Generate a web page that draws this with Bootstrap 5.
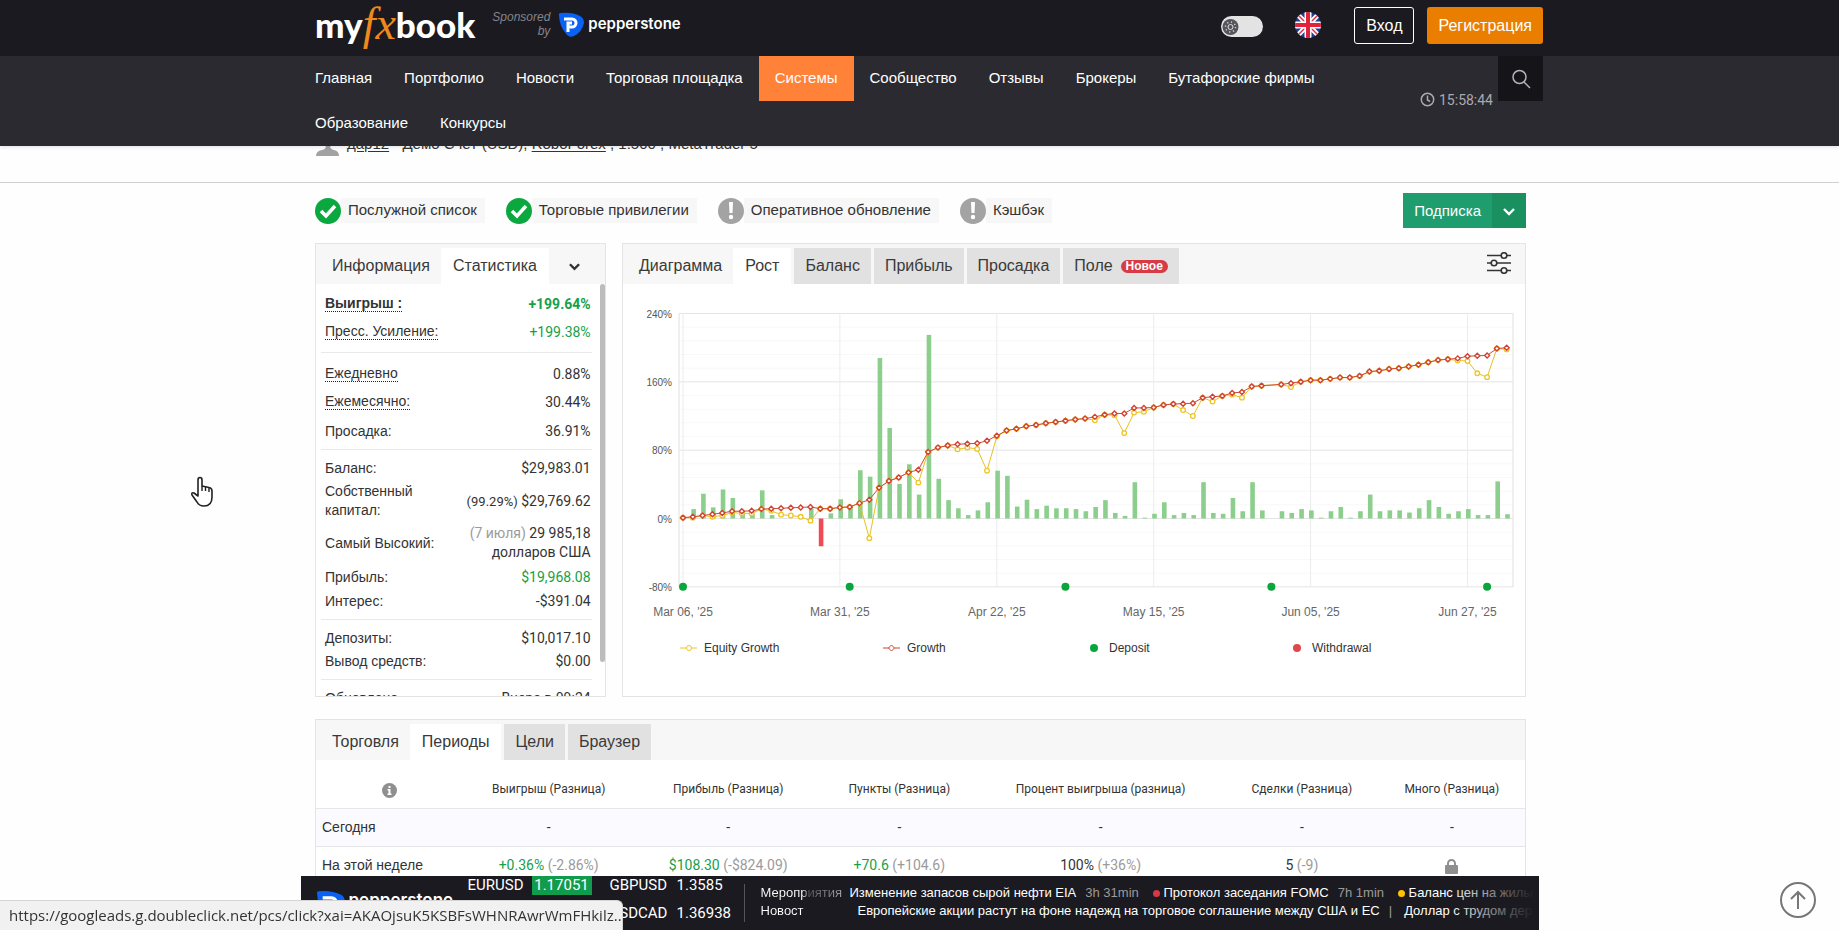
<!DOCTYPE html>
<html lang="ru">
<head>
<meta charset="utf-8">
<meta name="viewport" content="width=device-width, initial-scale=1">
<title>Myfxbook</title>
<link rel="stylesheet" href="https://cdn.jsdelivr.net/npm/bootstrap@5.3.0/dist/css/bootstrap.min.css">
<style>
  body { font-family: "Liberation Sans", Arial, sans-serif; font-size: 14px; line-height: 20px; color: #333; background: #fefefe; overflow: hidden; height: 100vh; }
  a { color: inherit; text-decoration: none; }
  .wrap { width: 100%; max-width: 1213px; margin: 0 auto; padding-left: 2px; }
  .num { font-family: Roboto, "Liberation Sans", sans-serif; }
  .wide-row { margin-right: -17px; }

  .topbar { background: #1b1a20; }
  .topbar .wide-row { height: 56px; }
  .logo-row { margin-bottom: 8px; }
  .logo { font-family: Lato, sans-serif; font-weight: 900; font-size: 35px; line-height: 48px; color: #fff; }
  .logo i { font-family: "Liberation Serif", serif; font-weight: 400; font-size: 46px; color: #ee8a1d; }
  .sponsor { font-size: 12px; line-height: 14px; font-style: italic; color: #85848a; width: 60px; margin-left: 15px; }
  .pepper { font-family: Inter, sans-serif; font-weight: 600; font-size: 15px; color: #fff; }
  .theme-switch { width: 42px; height: 21px; border-radius: 11px; background: #e3e3e3; margin-bottom: 3px; }
  .flag-link { margin: 0 33px 6px 32px; }
  .btn-top { height: 37px; border-radius: 3px; font-size: 16px; line-height: 20px; color: #fff; padding: 0 11px; margin-bottom: 5px; }
  .btn-login { border: 1px solid #fff; margin-right: 13px; }
  .btn-join { background: #e97e00; border: 0; }

  .mainnav { background: #2b2a31; }
  .mainnav ul { margin-left: -16px; }
  .mainnav li a { display: block; padding: 0 16px 2px; line-height: 43px; font-size: 15px; color: #fff; }
  .mainnav li a.active { background: #ff8238; }
  .clock { color: #aaa9ae; height: 45px; margin-top: 21px; padding-right: 5px; }
  .search { width: 45px; height: 45px; background: #151419; border: 0; padding: 0; }
  header { position: relative; z-index: 2; box-shadow: 0 1px 4px rgba(0,0,0,.12); }

  .account { margin-top: -20px; height: 57px; border-bottom: 1px solid #d0d0d0; font-size: 15px; }
  .account u { text-underline-offset: 2px; }
  .states { gap: 21px; padding-top: 10px; }
  .state { height: 26px; font-size: 15px; }
  .state span { background: #f7f7f7; height: 25px; line-height: 24px; padding: 0 8px 0 7px; }
  .btn-sub { height: 35px; background: #1f9d6e; color: #fff; border: 0; border-radius: 0; font-size: 15px; padding: 0 11px; }
  .btn-sub-more { background: #1a9061; width: 34px; padding: 0; }

  .panels { margin-top: 15px; }
  .trades { margin-top: 22px; }
  .panel { border: 1px solid #e4e4e4; background: #fff; }
  .tabs { background: #f7f7f7; height: 40px; padding: 4px 0 0 4px; }
  .tabs button { border: 0; background: none; font-size: 16px; height: 36px; padding: 0 10px; color: #3a3a3a; }
  .tabs .plain { padding: 0 11px 0 12px; }
  .tabs .on { background: #fff; padding: 0 12px; }
  .tabs .off { background: #e1e1e1; margin-left: 3px; padding: 0 11px; }
  .pill-new { background: #d73c46; color: #fff; font: bold 12px/13px "Liberation Sans", sans-serif; border-radius: 7px; padding: 0 5px; margin-left: 8px; }
  .stats-panel { width: 24%; height: 454px; overflow: hidden; }
  .chart-panel { width: 904px; height: 454px; }
  .stats { padding: 4px 8px 0 5px; }
  .stats table { width: 100%; }
  .stats td { padding: 2px 1px 2px 4px; line-height: 19px; vertical-align: middle; }
  .stats td:last-child { text-align: right; font-family: Roboto, "Liberation Sans", sans-serif; }
  .stats .tall td { height: 30px; }
  .stats .tall td:last-child { padding-top: 5px; }
  .stats .sep td { border-top: 1px solid #e9e9e9; padding-top: 9px; }
  .stats .last td { padding-bottom: 8px; }
  .stats .tall.last td { padding-bottom: 10px; }
  .stats .tall.sep td { padding-top: 9px; }
  .stats .tall.sep td:last-child { padding-top: 12px; }
  .stats .room td { padding-top: 6px; }
  .stats .mid td { height: 26px; }
  .stats .hint { border-bottom: 1px dotted #222; line-height: 16px; display: inline-block; }
  .eq { font-size: 13px; }
  .thumb { width: 5px; height: 378px; background: #bcbcbc; border-radius: 3px; }
  .gain { color: #17a048; }
  .soft { color: #9b9b9b; }

  .periods { width: 100%; table-layout: fixed; }
  .periods th { font: 12px/20px Roboto, sans-serif; text-align: center; height: 48px; padding-top: 12px; }
  .periods td { text-align: center; height: 38px; border-top: 1px solid #e6e6ea; font-family: Roboto, sans-serif; padding: 0; }
  .periods td:first-child { text-align: left; padding-left: 6px; font-family: "Liberation Sans", sans-serif; }
  .periods .stripe td { background: #fafaff; }

  .ticker { position: fixed; left: 0; right: 0; bottom: 0; z-index: 4; }
  .ticker > div { max-width: 1238px; height: 54px; margin: 0 auto; background: #1b1a20; color: #fff; position: relative; padding-left: 15px; }
  .quotes { width: 276px; font-size: 15px; display: grid; grid-template-columns: 64px 78px 67px 1fr; grid-template-rows: 19px 19px; align-content: start; row-gap: 9px; line-height: 19px; font-family: Roboto, sans-serif; }
  .quotes b { background: #119b4d; font-weight: 400; width: 60px; text-align: center; }
  .quotes small { grid-column: 1 / 3; font-size: 12px; line-height: 12px; color: #c8c8cc; }
  .brand { width: 152px; padding-top: 10px; }
  .brand .pepper { font-size: 17px; }
  .rule { width: 1px; height: 38px; background: #55545a; margin: 8px 16px 0 0; }
  .feed { font-size: 13px; line-height: 18px; margin-top: 8px; white-space: nowrap; overflow: hidden; }
  .feed .soft { margin-left: 9px; }
  .feed-name { width: 89px; font-size: 13px; background: linear-gradient(90deg, #fff 42px, #56555b 47px, #a5a4a8 84px); -webkit-background-clip: text; background-clip: text; color: transparent; }
  .feed-fade { width: 110px; height: 54px; position: absolute; right: 0; top: 0; background: linear-gradient(90deg, transparent 20px, #1b1a20 105px); }
  .ev { margin-left: 14px; }
  .dot { width: 7px; height: 7px; border-radius: 50%; display: inline-block; }
  .urlbar { position: fixed; left: 0; bottom: 0; z-index: 5; height: 30px; border: 1px solid #d5d5d5; border-width: 1px 1px 0 0; border-radius: 0 6px 0 0; background: #f1f1f1; font: 15px/28px "Open Sans", "Noto Sans", sans-serif; padding: 0 0 0 9px; color: #333; }
  .to-top { position: fixed; right: 22px; bottom: 11px; z-index: 4; width: 38px; height: 38px; padding: 0; border: 0; background: none; }
  .hand { position: fixed; left: 190px; top: 476px; z-index: 6; }
</style>
</head>
<body>
<header>
  <div class="topbar">
    <div class="wrap">
      <div class="wide-row d-flex align-items-center">
        <div class="logo-row d-flex align-items-center">
          <a href="#" class="logo d-flex align-items-center"><span>my</span><i>fx</i><span>book</span></a>
          <div class="sponsor text-end">Sponsored by</div>
          <svg class="ms-2" width="26" height="25" viewBox="0 0 26 25"><path d="M1 3Q0 1 3 1Q14 0 22 4Q26 6 26 11Q24 20 16 24Q12 26 9 23Q1 14 1 3Z" fill="#0a62f5"/><path d="M6 7H14A4 4 0 0 1 14 15H9M10 20V11H14" fill="none" stroke="#fff" stroke-width="3"/></svg>
          <a href="#" class="pepper ms-1">pepperstone</a>
        </div>
        <button class="theme-switch ms-auto border-0 p-0 d-flex align-items-center" aria-label="Тема">
          <svg width="18" height="18" viewBox="0 0 18 18"><circle cx="9.500" cy="9" r="8" fill="#55545d"/><circle cx="9.500" cy="9" r="2.500" fill="none" stroke="#ddd"/><circle cx="9.500" cy="9" r="5" fill="none" stroke="#ccc" stroke-width="1.500" stroke-dasharray="1.200 2.700"/></svg>
        </button>
        <a href="#" aria-label="English" class="d-flex flag-link">
          <svg width="26" height="26" viewBox="0 0 26 26"><clipPath id="c"><circle cx="13" cy="13" r="13"/></clipPath><g clip-path="url(#c)"><rect width="26" height="26" fill="#1d3f8f"/><path d="M0 0L26 26M26 0L0 26" stroke="#fff" stroke-width="5"/><path d="M0 0L26 26M26 0L0 26" stroke="#e0334b" stroke-width="1.500"/><path d="M13 0V26M0 13H26" stroke="#fff" stroke-width="7"/><path d="M13 0V26M0 13H26" stroke="#e0223b" stroke-width="4"/></g></svg>
        </a>
        <button class="btn-top btn-login bg-transparent">Вход</button>
        <button class="btn-top btn-join">Регистрация</button>
      </div>
    </div>
  </div>
  <nav class="mainnav">
    <div class="wrap">
      <div class="wide-row d-flex">
        <ul class="list-unstyled d-flex flex-wrap mb-0 flex-grow-1">
          <li><a href="#">Главная</a></li><li><a href="#">Портфолио</a></li><li><a href="#">Новости</a></li><li><a href="#">Торговая площадка</a></li><li><a href="#" class="active">Системы</a></li><li><a href="#">Сообщество</a></li><li><a href="#">Отзывы</a></li><li><a href="#">Брокеры</a></li><li><a href="#">Бутафорские фирмы</a></li><li><a href="#">Образование</a></li><li><a href="#">Конкурсы</a></li>
        </ul>
        <div class="clock num d-flex align-items-center">
          <svg class="me-1" width="15" height="15" viewBox="0 0 15 15" fill="none" stroke="#aaa9ae" stroke-width="1.500"><circle cx="7.500" cy="7.500" r="6.200"/><path d="M7.500 3.500V8L10 9.500"/></svg>15:58:44
        </div>
        <button class="search flex-shrink-0" aria-label="Поиск"><svg width="20" height="20" viewBox="0 0 20 20" fill="none" stroke="#b5b4b9" stroke-width="1.500"><circle cx="8.500" cy="8" r="6.500"/><path d="M13 13L19 19"/></svg></button>
      </div>
    </div>
  </nav>
</header>

<div class="account">
  <div class="wrap d-flex">
    <svg class="mt-2" width="24" height="24" viewBox="0 0 24 24" fill="#a2a2a2"><circle cx="13" cy="7" r="6"/><path d="M1 22Q1 17 7 16Q11 15 11 12H15Q15 15 19 16Q24 17 24 22Z"/></svg>
    <div class="ms-2 pt-1 mt-1"><u>дар12</u> - Демо Счёт (USD), <u>RoboForex</u> , 1:500 , MetaTrader 5</div>
  </div>
</div>

<main class="wrap">
  <div class="d-flex align-items-center states">
    <div class="state d-flex align-items-center"><svg width="26" height="26" viewBox="0 0 26 26"><circle cx="13" cy="13" r="13" fill="#0aa83e"/><path d="M6 13L11 18L20 8" fill="none" stroke="#fff" stroke-width="3.500"/></svg><span>Послужной список</span></div>
    <div class="state d-flex align-items-center"><svg width="26" height="26" viewBox="0 0 26 26"><circle cx="13" cy="13" r="13" fill="#0aa83e"/><path d="M6 13L11 18L20 8" fill="none" stroke="#fff" stroke-width="3.500"/></svg><span>Торговые привилегии</span></div>
    <div class="state d-flex align-items-center"><svg width="26" height="26" viewBox="0 0 26 26"><circle cx="13" cy="13" r="13" fill="#a3a3a3"/><path d="M11 4H15L14.500 15H11.500Z" fill="#fff"/><circle cx="13" cy="19" r="2.200" fill="#fff"/></svg><span>Оперативное обновление</span></div>
    <div class="state d-flex align-items-center"><svg width="26" height="26" viewBox="0 0 26 26"><circle cx="13" cy="13" r="13" fill="#a3a3a3"/><path d="M11 4H15L14.500 15H11.500Z" fill="#fff"/><circle cx="13" cy="19" r="2.200" fill="#fff"/></svg><span>Кэшбэк</span></div>
    <div class="ms-auto d-flex"><button class="btn-sub">Подписка</button><button class="btn-sub btn-sub-more" aria-label="Ещё"><svg width="12" height="8" viewBox="0 0 12 8" fill="none" stroke="#fff" stroke-width="2.400"><path d="M1 1L6 6L11 1"/></svg></button></div>
  </div>

  <div class="d-flex justify-content-between panels">
    <section class="panel stats-panel">
      <div class="tabs d-flex"><button class="plain">Информация</button><button class="on">Статистика</button><button class="px-3 ms-1" aria-label="Ещё"><svg width="11" height="8" viewBox="0 0 12 8" fill="none" stroke="#333" stroke-width="2.600"><path d="M1 1L6 6L11 1"/></svg></button></div>
      <div class="d-flex">
        <div class="stats flex-grow-1">
          <table>
            <tr class="tall fw-bold"><td><span class="hint">Выигрыш :</span></td><td class="gain">+199.64%</td></tr>
            <tr class="tall last"><td><span class="hint">Пресс. Усиление:</span></td><td class="gain">+199.38%</td></tr>
            <tr class="sep tall"><td><span class="hint">Ежедневно</span></td><td>0.88%</td></tr>
            <tr class="tall"><td><span class="hint">Ежемесячно:</span></td><td>30.44%</td></tr>
            <tr class="last room"><td>Просадка:</td><td>36.91%</td></tr>
            <tr class="sep"><td>Баланс:</td><td>$29,983.01</td></tr>
            <tr><td>Собственный<br>капитал:</td><td><span class="eq">(99.29%)</span> $29,769.62</td></tr>
            <tr><td>Самый Высокий:</td><td><span class="soft">(7 июля)</span> 29 985,18<br>долларов США</td></tr>
            <tr class="mid"><td>Прибыль:</td><td class="gain">$19,968.08</td></tr>
            <tr class="last"><td>Интерес:</td><td>-$391.04</td></tr>
            <tr class="sep"><td>Депозиты:</td><td>$10,017.10</td></tr>
            <tr class="last"><td>Вывод средств:</td><td>$0.00</td></tr>
            <tr class="sep"><td>Обновлено</td><td>Вчера в 09:24</td></tr>
          </table>
        </div>
        <div class="thumb"></div>
      </div>
    </section>

    <section class="panel chart-panel">
      <div class="tabs d-flex"><button class="plain">Диаграмма</button><button class="on">Рост</button><button class="off">Баланс</button><button class="off">Прибыль</button><button class="off">Просадка</button><button class="off d-flex align-items-center">Поле <span class="pill-new">Новое</span></button>
        <button class="ms-auto me-1 d-flex align-items-start pt-1" aria-label="Настройки"><svg width="24" height="22" viewBox="0 0 24 22" fill="#f7f7f7" stroke="#333" stroke-width="1.600"><path d="M0 3.500H24M0 11H24M0 18.500H24"/><circle cx="17" cy="3.500" r="2.800"/><circle cx="7" cy="11" r="2.800"/><circle cx="17" cy="18.500" r="2.800"/></svg></button>
      </div>
      <svg id="chart" class="w-100 d-block" viewBox="0 0 902 410" font-family="Liberation Sans, sans-serif"></svg>
    </section>
  </div>

  <section class="panel trades">
    <div class="tabs d-flex"><button class="plain">Торговля</button><button class="on">Периоды</button><button class="off">Цели</button><button class="off">Браузер</button></div>
    <table class="periods">
      <colgroup><col style="width:12.2%"><col style="width:14.1%"><col style="width:15.6%"><col style="width:12.7%"><col style="width:20.6%"><col style="width:12.7%"><col style="width:12.1%"></colgroup>
      <tr><th><svg width="15" height="15" viewBox="0 0 15 15"><circle cx="7.500" cy="7.500" r="7.500" fill="#8f8f8f"/><path d="M6.500 3H8.500V5H6.500ZM5.500 6H8.500V10.500H9.500V12H5.500V10.500H6.500V7.500H5.500Z" fill="#fff"/></svg></th><th>Выигрыш (Разница)</th><th>Прибыль (Разница)</th><th>Пункты (Разница)</th><th>Процент выигрыша (разница)</th><th>Сделки (Разница)</th><th>Много (Разница)</th></tr>
      <tr class="stripe"><td>Сегодня</td><td>-</td><td>-</td><td>-</td><td>-</td><td>-</td><td>-</td></tr>
      <tr><td>На этой неделе</td><td><span class="gain">+0.36%</span> <span class="soft">(-2.86%)</span></td><td><span class="gain">$108.30</span> <span class="soft">(-$824.09)</span></td><td><span class="gain">+70.6</span> <span class="soft">(+104.6)</span></td><td>100% <span class="soft">(+36%)</span></td><td>5 <span class="soft">(-9)</span></td><td><svg width="13" height="15" viewBox="0 0 13 15"><rect y="6" width="13" height="9" rx="1" fill="#8f8f8f"/><path d="M3 7V4.500A3.500 3.500 0 0 1 10 4.500V7" fill="none" stroke="#8f8f8f" stroke-width="2"/></svg></td></tr>
    </table>
  </section>
</main>

<div class="ticker"><div class="d-flex">
  <div class="brand d-flex align-items-start flex-shrink-0"><svg class="mt-1" width="29" height="28" viewBox="0 0 26 25"><path d="M1 3Q0 1 3 1Q14 0 22 4Q26 6 26 11Q24 20 16 24Q12 26 9 23Q1 14 1 3Z" fill="#0a62f5"/><path d="M6 7H14A4 4 0 0 1 14 15H9M10 20V11H14" fill="none" stroke="#fff" stroke-width="3"/></svg><span class="pepper ms-1 mt-1">pepperstone</span></div>
  <div class="quotes flex-shrink-0"><span>EURUSD</span><b>1.17051</b><span>GBPUSD</span><span>1.3585</span><small>Просмотр графика</small><span>USDCAD</span><span>1.36938</span></div>
  <div class="rule flex-shrink-0"></div>
  <div class="feed flex-grow-1">
    <div class="d-flex"><span class="feed-name flex-shrink-0">Мероприятия</span><span>Изменение запасов сырой нефти EIA</span><span class="soft">3h 31min</span><span class="ev"><i class="dot bg-danger"></i> Протокол заседания FOMC</span><span class="soft">7h 1min</span><span class="ev"><i class="dot bg-warning"></i> Баланс цен на жилье</span></div>
    <div class="d-flex"><span class="feed-name flex-shrink-0">Новост</span><span class="ps-2">Европейские акции растут на фоне надежд на торговое соглашение между США и ЕС</span><span class="soft pe-2 me-1">|</span><span>Доллар с трудом держится</span></div>
  </div>
  <div class="feed-fade"></div>
</div></div>
<div class="urlbar">https://googleads.g.doubleclick.net/pcs/click?xai=AKAOjsuK5KSBFsWHNRAwrWmFHkilz..</div>
<button class="to-top" aria-label="Наверх"><svg width="38" height="38" viewBox="0 0 38 38" fill="none" stroke="#777" stroke-width="2"><circle cx="19" cy="19" r="17"/><path d="M19 28V11M12 18L19 11L26 18"/></svg></button>
<svg class="hand" width="24" height="32" viewBox="0 0 24 32"><path d="M8 20V4Q8 1.500 10 1.500Q12 1.500 12 4V10L19 11.500Q22 12 22 15V21Q22 30 14 30Q9 30 7 26L2 19Q1 16 4 17Z" fill="#fff" stroke="#222" stroke-width="1.600" stroke-linejoin="round"/><path d="M12 10V15M15.500 11V15M19 12V16" stroke="#222" stroke-width="1.400"/></svg>

<script src="https://cdn.jsdelivr.net/npm/bootstrap@5.3.0/dist/js/bootstrap.bundle.min.js"></script>
<script>
  // Daily growth in percent; null is a day without trading.
  const growth = [1,2,3.5,5,6.5,8.5,8.5,9,11,11.5,12,12.5,13,13.5,11.5,11.5,13,13.5,18,22,36,44,48,54,57,78,83,85.5,87,87.5,88,91,97,103,105,108,109.5,111.5,113,114.5,116,117,119,121.5,123,123,129.5,129.5,130,133,134,134.5,135,141.5,142.5,143.5,147,148,154.5,155.5,null,157,158.5,160,162,162,163.5,165,165,167,172,173,175,176,178,180,183,185.5,186.5,187.5,190,190.5,191,199,200];
  // Days on which equity differs from growth.
  const equityDiff = {1:1,3:2,4:3.5,5:7,6:6,7:6,9:9,10:4.5,11:3.5,12:2,13:-2.5,19:-23,24:42,28:81,29:83,30:81.5,31:56,32:96,42:115,44:121,45:100,46:124,47:125,51:127,52:120,54:137,56:145,57:141.5,62:154,79:185,80:184.5,81:170,82:165.5,84:198};
  const bars = [0,11,29,13,34,24,8,5,33,4,0,0,0,12,-32.5,6,22.5,14,56.5,49,188,106,40.5,63.5,28,215,46.5,21.5,12,4,9.5,19,56,50,14,22,11,15,12,12,11,8.5,13.5,21.5,6.5,3,42.5,1,5.5,19,4,6.5,4,42.5,6.5,5.5,24,8.5,42.5,9.5,0,8.5,6.5,11,9.5,1,8.5,13.5,1,8.5,28,8.5,9.5,9.5,7,12,21.5,13.5,5.5,8.5,11,4,4,43.5,5];
  const X = i => 60 + i * 9.806, Y = v => 234.5 - v * 0.854;
  let s = '';
  for (let v = -80; v <= 240; v += 16) {
    const major = (v + 80) % 80 === 0;
    s += `<path d="M56 ${Y(v)}H890" stroke="${major ? '#e4e4e4' : '#f8f8f8'}"/>`;
    if (major) s += `<text x="49" y="${Y(v) + 4}" font-size="10" fill="#555" text-anchor="end">${v}%</text>`;
  }
  s += `<path d="M56 29.500V303M890 29.500V303" stroke="#e0e0e0"/>`;
  ["Mar 06, '25","Mar 31, '25","Apr 22, '25","May 15, '25","Jun 05, '25","Jun 27, '25"].forEach((t, k) => {
    s += `<path d="M${X(k * 16)} 29.500V303" stroke="#ececec"/><text x="${X(k * 16)}" y="332" font-size="12" fill="#666" text-anchor="middle">${t}</text>`;
  });
  bars.forEach((v, i) => { if (v) s += `<rect x="${X(i) - 1.5}" y="${Math.min(Y(v), Y(0))}" width="4.600" height="${Math.abs(v) * 0.854}" fill="${v < 0 ? '#f04a56' : '#8ccf8c'}"/>`; });
  const line = (vals, color) => {
    const pts = vals.map((v, i) => v === null ? null : [X(i), Y(v)]).filter(Boolean);
    s += `<polyline fill="none" stroke="${color}" points="${pts.join(' ')}"/>`;
    return pts;
  };
  const equity = growth.map((v, i) => i in equityDiff ? equityDiff[i] : v);
  line(equity, '#e8c11c').forEach(p => s += `<circle cx="${p[0]}" cy="${p[1]}" r="2.300" fill="#fff" stroke="#eec524" stroke-width="1.300"/>`);
  line(growth, '#cf4a35').forEach(p => s += `<path d="M${p[0]} ${p[1] - 2.5}l2.500 2.500l-2.500 2.500l-2.500-2.500z" fill="#fff" stroke="#d04232" stroke-width="1.400"/>`);
  [0, 17, 39, 60, 82].forEach(i => s += `<circle cx="${X(i)}" cy="${Y(-80)}" r="4" fill="#0aa53c"/>`);
  s += `<g font-size="12" fill="#333"><path d="M57 364h17" stroke="#eec524"/><circle cx="66" cy="364" r="2.500" fill="#fff" stroke="#eec524"/><text x="81" y="368">Equity Growth</text>
    <path d="M260 364h17" stroke="#d04232"/><path d="M268.500 361l3 3l-3 3l-3-3z" fill="#fff" stroke="#d04232"/><text x="284" y="368">Growth</text>
    <circle cx="471" cy="364" r="4" fill="#0aa53c"/><text x="486" y="368">Deposit</text><circle cx="674" cy="364" r="4" fill="#e0474c"/><text x="689" y="368">Withdrawal</text></g>`;
  document.getElementById('chart').innerHTML = s;
</script>
</body>
</html>
